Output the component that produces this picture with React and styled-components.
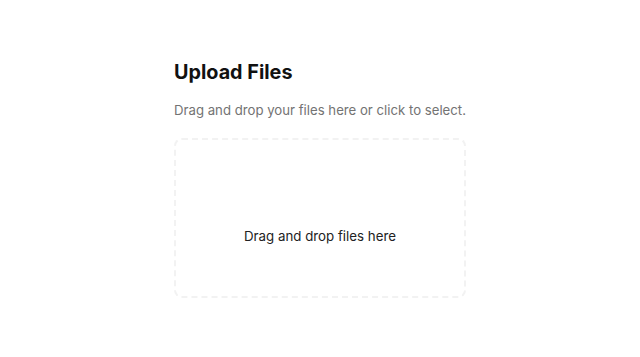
import React from "react";
import styled, { createGlobalStyle } from "styled-components";

const GlobalStyle = createGlobalStyle`
  body {
    margin: 0;
    background: #ffffff;
    font-family: Inter, "Noto Sans", sans-serif;
  }
`;

const SPage = styled.div`
  display: flex;
  justify-content: center;
  padding-top: 58px;
`;

const SUploader = styled.div`
  width: 292px;
  display: flex;
  flex-direction: column;
`;

const STitle = styled.h1`
  margin: 0;
  font-size: 19.8px;
  font-weight: 700;
  line-height: 28px;
  color: #111111;
`;

const SHint = styled.p`
  margin: 14px 0 0;
  font-size: 13.2px;
  line-height: 20px;
  color: #737373;
`;

const SDropZone = styled.div`
  margin-top: 18px;
  height: 160px;
  box-sizing: border-box;
  padding-top: 36px;
  border: 2px dashed #f2f2f2;
  border-radius: 8px;
  display: flex;
  align-items: center;
  justify-content: center;
  font-size: 13.3px;
  color: #222222;
  cursor: pointer;
`;

export default function App() {
  return (
    <>
      <GlobalStyle />
      <SPage>
        <SUploader>
          <STitle>Upload Files</STitle>
          <SHint>Drag and drop your files here or click to select.</SHint>
          <SDropZone>Drag and drop files here</SDropZone>
        </SUploader>
      </SPage>
    </>
  );
}
